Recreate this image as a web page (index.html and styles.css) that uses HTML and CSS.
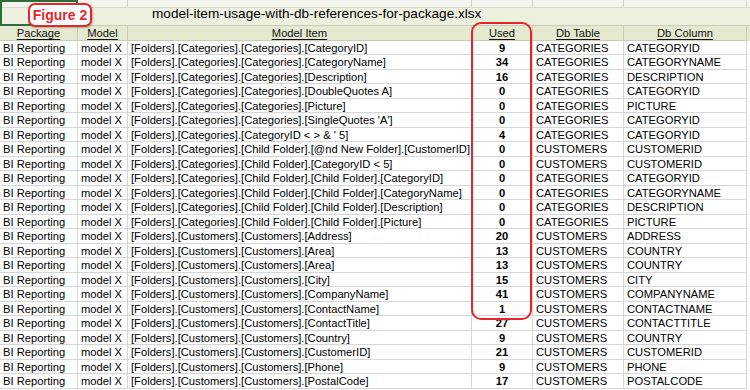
FILE: index.html
```html
<!DOCTYPE html>
<html>
<head>
<meta charset="utf-8">
<link rel="stylesheet" href="styles.css">
</head>
<body>
<div class="sheet">
  <div class="top">
    <div class="strip">
      <div class="sc w1"></div><div class="sc w2"></div><div class="sc w3"></div><div class="sc w4"></div><div class="sc w5"></div><div class="sc w6"></div>
    </div>
    <div class="title-row">
      <div class="sel"></div>
      <div class="title">model-item-usage-with-db-references-for-package.xlsx</div>
    </div>
  </div>
  <div class="row head">
    <div class="c ctr"><u>Package</u></div>
    <div class="c ctr"><u>Model</u></div>
    <div class="c ctr"><u>Model Item</u></div>
    <div class="c ctr"><u>Used</u></div>
    <div class="c ctr"><u>Db Table</u></div>
    <div class="c ctr"><u>Db Column</u></div>
  </div>
  <div id="rows"></div>
  <div class="fig">Figure 2</div>
  <div class="circle"></div>
</div>
<script>
var d=[
["[Folders].[Categories].[Categories].[CategoryID]","9","CATEGORIES","CATEGORYID"],
["[Folders].[Categories].[Categories].[CategoryName]","34","CATEGORIES","CATEGORYNAME"],
["[Folders].[Categories].[Categories].[Description]","16","CATEGORIES","DESCRIPTION"],
["[Folders].[Categories].[Categories].[DoubleQuotes A]","0","CATEGORIES","CATEGORYID"],
["[Folders].[Categories].[Categories].[Picture]","0","CATEGORIES","PICTURE"],
["[Folders].[Categories].[Categories].[SingleQuotes 'A']","0","CATEGORIES","CATEGORYID"],
["[Folders].[Categories].[CategoryID < > & ' 5]","4","CATEGORIES","CATEGORYID"],
["[Folders].[Categories].[Child Folder].[@nd New Folder].[CustomerID]","0","CUSTOMERS","CUSTOMERID"],
["[Folders].[Categories].[Child Folder].[CategoryID < 5]","0","CUSTOMERS","CUSTOMERID"],
["[Folders].[Categories].[Child Folder].[Child Folder].[CategoryID]","0","CATEGORIES","CATEGORYID"],
["[Folders].[Categories].[Child Folder].[Child Folder].[CategoryName]","0","CATEGORIES","CATEGORYNAME"],
["[Folders].[Categories].[Child Folder].[Child Folder].[Description]","0","CATEGORIES","DESCRIPTION"],
["[Folders].[Categories].[Child Folder].[Child Folder].[Picture]","0","CATEGORIES","PICTURE"],
["[Folders].[Customers].[Customers].[Address]","20","CUSTOMERS","ADDRESS"],
["[Folders].[Customers].[Customers].[Area]","13","CUSTOMERS","COUNTRY"],
["[Folders].[Customers].[Customers].[Area]","13","CUSTOMERS","COUNTRY"],
["[Folders].[Customers].[Customers].[City]","15","CUSTOMERS","CITY"],
["[Folders].[Customers].[Customers].[CompanyName]","41","CUSTOMERS","COMPANYNAME"],
["[Folders].[Customers].[Customers].[ContactName]","1","CUSTOMERS","CONTACTNAME"],
["[Folders].[Customers].[Customers].[ContactTitle]","27","CUSTOMERS","CONTACTTITLE"],
["[Folders].[Customers].[Customers].[Country]","9","CUSTOMERS","COUNTRY"],
["[Folders].[Customers].[Customers].[CustomerID]","21","CUSTOMERS","CUSTOMERID"],
["[Folders].[Customers].[Customers].[Phone]","9","CUSTOMERS","PHONE"],
["[Folders].[Customers].[Customers].[PostalCode]","17","CUSTOMERS","POSTALCODE"]
];
var h="";
function esc(s){return s.replace(/&/g,"&amp;").replace(/</g,"&lt;").replace(/>/g,"&gt;");}
d.forEach(function(r){
  h+='<div class="row"><div class="c">BI Reporting</div><div class="c">model X</div><div class="c">'+esc(r[0])+'</div><div class="c ctr num">'+r[1]+'</div><div class="c">'+r[2]+'</div><div class="c">'+r[3]+'</div></div>';
});
document.getElementById("rows").innerHTML=h;
</script>
</body>
</html>
```
FILE: styles.css
```css
html, body {
  margin: 0;
  padding: 0;
  background: #ffffff;
}
.sheet {
  position: relative;
  width: 750px;
  height: 390px;
  overflow: hidden;
  font-family: "Liberation Sans", Arial, sans-serif;
  font-size: 11.2px;
  color: #000;
}
.top {
  height: 26px;
  background: #eef0df;
  border-bottom: 1px solid #c9ccb8;
  box-sizing: border-box;
  position: relative;
}
.strip {
  display: flex;
  height: 8px;
  background: #f4f5ee;
  border-bottom: 1px solid #d9dbcc;
  box-sizing: border-box;
}
.sc { border-right: 1px solid #cfd1c2; box-sizing: border-box; height: 100%; }
.w1 { width: 78px; }
.w2 { width: 50px; }
.w3 { width: 344px; }
.w4 { width: 61px; }
.w5 { width: 91px; }
.w6 { width: 123px; }
.title-row {
  display: flex;
  height: 17px;
  align-items: center;
}
.title {
  padding-left: 152px;
  font-size: 13.6px;
  margin-top: -6px;
}
.sel {
  position: absolute;
  left: 0;
  top: 0;
  width: 78px;
  height: 26px;
  border: 2px solid #2f6e3a;
  box-sizing: border-box;
}
.row {
  display: grid;
  grid-template-columns: 78px 50px 344px 61px 91px 123px;
  height: 14.5px;
  line-height: 14px;
}
.c {
  border-right: 1px solid #d6d6d6;
  border-bottom: 1px solid #d6d6d6;
  padding-left: 3px;
  white-space: nowrap;
  overflow: hidden;
  box-sizing: border-box;
}
.ctr { text-align: center; padding-left: 0; }
.num { font-weight: bold; }
.head {
  background: #e4e9d0;
}
.head .c {
  border-right: 1px solid #c9ccb8;
  border-bottom: 1px solid #c9ccb8;
  color: #111;
}
.head u { text-underline-offset: 2px; }
.fig {
  position: absolute;
  left: 28px;
  top: 3px;
  width: 64px;
  height: 24px;
  box-sizing: border-box;
  border: 2px solid #e3262a;
  border-radius: 7px;
  background: #ffffff;
  color: #e3262a;
  font-weight: bold;
  font-size: 14px;
  line-height: 20px;
  text-align: center;
  box-shadow: 1px 1px 2px rgba(0,0,0,0.25);
}
.circle {
  position: absolute;
  left: 471px;
  top: 22px;
  width: 61px;
  height: 298px;
  box-sizing: border-box;
  border: 2px solid #e3262a;
  border-radius: 10px;
}
```
